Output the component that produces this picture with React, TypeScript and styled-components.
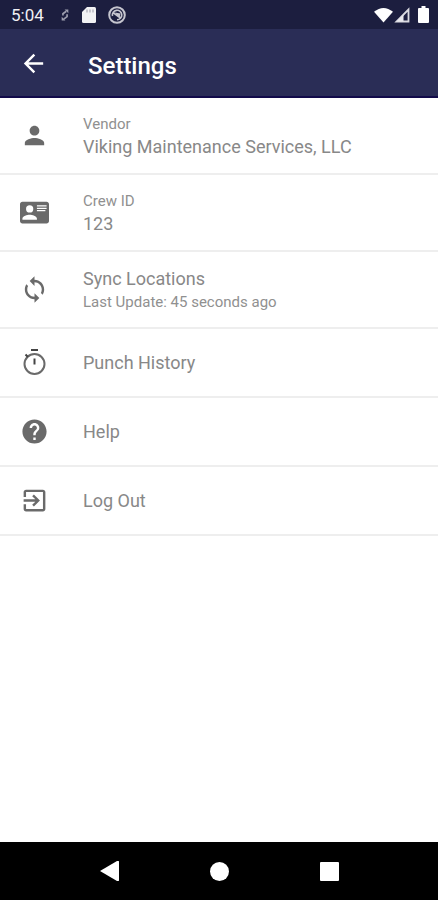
import React from 'react';
import styled, { createGlobalStyle } from 'styled-components';

const GlobalStyle = createGlobalStyle`
  * { box-sizing: border-box; }
  body { margin: 0; background: #fff; font-family: Roboto, sans-serif; }
  button { font: inherit; color: inherit; border: 0; padding: 0; background: none; cursor: pointer; }
`;

const Screen = styled.div`
  min-height: 100vh;
  display: flex;
  flex-direction: column;
`;

const StatusBar = styled.div`
  height: 29px;
  padding: 0 9px 0 11px;
  display: flex;
  align-items: center;
  justify-content: space-between;
  background: #1c1e3f;
  color: #fff;
`;

const StatusGroup = styled.div`
  display: flex;
  align-items: center;
`;

const Notifications = styled(StatusGroup)`
  gap: 12px;
  margin-left: 16px;
`;

const Indicators = styled(StatusGroup)`
  gap: 1px;
`;

const BatterySlot = styled.span`
  display: flex;
  margin-left: 7px;
`;

const Clock = styled.time`
  font-size: 17px;
  line-height: 20px;
  color: #f0f0f4;
`;

const AppBar = styled.header`
  height: 69px;
  padding: 2px 19px 0;
  display: flex;
  align-items: center;
  gap: 40px;
  background: #2a2d56;
  border-bottom: 2px solid #120b4a;
  color: #fff;
`;

const IconButton = styled.button`
  display: flex;
`;

const Title = styled.h1`
  margin: 4px 0 0;
  font-size: 24px;
  line-height: 32px;
  font-weight: 500;
`;

const List = styled.ul`
  flex: 1;
  margin: 0;
  padding: 0;
  list-style: none;
`;

const Item = styled.li`
  border-bottom: 2px solid #eee;
`;

const Row = styled.button<{ $tall: boolean }>`
  width: 100%;
  min-height: ${({ $tall }) => ($tall ? 75 : 67)}px;
  padding: 0 20px;
  display: flex;
  align-items: center;
  gap: 34px;
  text-align: left;
`;

const RowIcon = styled.span`
  width: 29px;
  display: flex;
  justify-content: center;
  color: #6a6a6a;
`;

const RowText = styled.span`
  display: flex;
  flex-direction: column;
`;

const Primary = styled.span`
  font-size: 18px;
  line-height: 24px;
  color: #888;
`;

const Secondary = styled.span`
  font-size: 15px;
  line-height: 22px;
  color: #909090;
`;

const NavBar = styled.nav`
  height: 58px;
  padding: 0 54px;
  display: grid;
  grid-template-columns: repeat(3, 1fr);
  align-items: center;
  background: #000;
  color: #fff;
`;

const NavButton = styled.button`
  display: flex;
  justify-content: center;
`;

type IconProps = { d: string; size?: number };

const Icon = ({ d, size = 29 }: IconProps) => (
  <svg width={size} height={size} viewBox="0 0 24 24" fill="currentColor" fillRule="evenodd" aria-hidden="true">
    <path d={d} />
  </svg>
);

const paths = {
  back: 'M20 11H7.83l5.59-5.59L12 4l-8 8 8 8 1.41-1.41L7.83 13H20v-2z',
  person: 'M12 12c2.21 0 4-1.79 4-4s-1.79-4-4-4-4 1.79-4 4 1.79 4 4 4zm0 2c-2.67 0-8 1.34-8 4v2h16v-2c0-2.66-5.33-4-8-4z',
  card: 'M2 3H22C23.05 3 24 3.95 24 5V19C24 20.05 23.05 21 22 21H2C.95 21 0 20.05 0 19V5C0 3.95.95 3 2 3M14 6V7H22V6H14M14 8V9H22V8H14M14 10V11H21V10H14M8 13.91C6 13.91 2 15 2 17V18H14V17C14 15 10 13.91 8 13.91M8 6A3 3 0 0 0 5 9A3 3 0 0 0 8 12A3 3 0 0 0 11 9A3 3 0 0 0 8 6Z',
  sync: 'M12 4V1L8 5l4 4V6c3.31 0 6 2.69 6 6 0 1.01-.25 1.97-.7 2.8l1.46 1.46C19.54 15.03 20 13.57 20 12c0-4.42-3.58-8-8-8zm0 14c-3.31 0-6-2.69-6-6 0-1.01.25-1.97.7-2.8L5.24 7.74C4.46 8.97 4 10.43 4 12c0 4.42 3.58 8 8 8v3l4-4-4-4v3z',
  help: 'M12 2C6.48 2 2 6.48 2 12s4.48 10 10 10 10-4.48 10-10S17.52 2 12 2zm1 17h-2v-2h2v2zm2.07-7.75l-.9.92C13.45 12.9 13 13.5 13 15h-2v-.5c0-1.1.45-2.1 1.17-2.83l1.24-1.26c.37-.36.59-.86.59-1.41 0-1.1-.9-2-2-2s-2 .9-2 2H8c0-2.21 1.79-4 4-4s4 1.79 4 4c0 .88-.36 1.68-.93 2.25z',
  logout: 'M10.09 15.59L11.5 17l5-5-5-5-1.41 1.41L12.67 11H3v2h9.67l-2.58 2.59zM19 3H5c-1.11 0-2 .9-2 2v4h2V5h14v14H5v-4H3v4c0 1.1.89 2 2 2h14c1.1 0 2-.9 2-2V5c0-1.1-.9-2-2-2z',
};

const Stopwatch = () => (
  <svg width="29" height="29" viewBox="0 0 29 29" fill="none" stroke="currentColor" strokeWidth="2" aria-hidden="true">
    <circle cx="14.5" cy="16" r="10" />
    <path d="M11 2h7M14.5 10.500v6M5.500 6.500l2.500 2.500" stroke="#444" />
  </svg>
);

const SyncStatus = () => (
  <svg width="10" height="14" viewBox="0 0 12 16" fill="none" stroke="#9c9dae" strokeWidth="2" aria-hidden="true">
    <path d="M3.500 8.500V6.500l4-3M8.500 7v3l-4 3" />
    <path d="M5.500 1.500h4.500v4.500zM2 10v4.500h4.500z" fill="#9c9dae" stroke="none" />
  </svg>
);

const SdCard = () => (
  <svg width="14" height="16" viewBox="0 0 14 16" aria-hidden="true">
    <path d="M5 0h7.500Q14 0 14 1.500v13q0 1.500-1.500 1.500h-11Q0 16 0 14.500V5z" fill="#f2f2f4" />
    <path d="M5 2.500v3M8 2.500v3M11 2.500v3" stroke="#aaa9b5" strokeWidth="1.200" />
  </svg>
);

const Badge = () => (
  <svg width="18" height="18" viewBox="0 0 18 18" fill="none" stroke="#c5c5ce" aria-hidden="true">
    <circle cx="9" cy="9" r="7.800" strokeWidth="2" />
    <path d="M4.500 10a4.700 4.700 0 1 1 4.500 3.700M5 6.500l7.500 5.500" strokeWidth="1.600" />
    <path d="M7 6.500l5.500 1-1 4.500z" fill="#c5c5ce" stroke="none" />
  </svg>
);

const Wifi = () => (
  <svg width="19" height="16" viewBox="0 0 20 16" fill="#fff" aria-hidden="true">
    <path d="M0 4.500Q10-3.500 20 4.500L10 16z" />
  </svg>
);

const Signal = () => (
  <svg width="16" height="16" viewBox="0 0 16 16" aria-hidden="true">
    <path d="M14.500 2.500V14.500H2.500z" fill="none" stroke="#d9d9df" strokeWidth="1.800" />
    <path d="M9.500 7.500v7H2.500z" fill="#e8e8ec" />
  </svg>
);

const Battery = () => (
  <svg width="11" height="17" viewBox="0 0 11 17" fill="#fff" aria-hidden="true">
    <path d="M3.500 0h4v2H10q1 0 1 1v13q0 1-1 1H1q-1 0-1-1V3q0-1 1-1h2.500z" />
  </svg>
);

type Entry = { icon: React.ReactNode; title: string; above?: string; below?: string };

const entries: Entry[] = [
  { icon: <Icon d={paths.person} />, above: 'Vendor', title: 'Viking Maintenance Services, LLC' },
  { icon: <Icon d={paths.card} />, above: 'Crew ID', title: '123' },
  { icon: <Icon d={paths.sync} />, title: 'Sync Locations', below: 'Last Update: 45 seconds ago' },
  { icon: <Stopwatch />, title: 'Punch History' },
  { icon: <Icon d={paths.help} />, title: 'Help' },
  { icon: <Icon d={paths.logout} />, title: 'Log Out' },
];

export default function App() {
  return (
    <Screen>
      <GlobalStyle />
      <StatusBar>
        <StatusGroup>
          <Clock>5:04</Clock>
          <Notifications>
            <SyncStatus />
            <SdCard />
            <Badge />
          </Notifications>
        </StatusGroup>
        <Indicators>
          <Wifi />
          <Signal />
          <BatterySlot><Battery /></BatterySlot>
        </Indicators>
      </StatusBar>
      <AppBar>
        <IconButton aria-label="Back"><Icon d={paths.back} /></IconButton>
        <Title>Settings</Title>
      </AppBar>
      <List>
        {entries.map(({ icon, title, above, below }) => (
          <Item key={title}>
            <Row $tall={Boolean(above || below)}>
              <RowIcon>{icon}</RowIcon>
              <RowText>
                {above && <Secondary>{above}</Secondary>}
                <Primary>{title}</Primary>
                {below && <Secondary>{below}</Secondary>}
              </RowText>
            </Row>
          </Item>
        ))}
      </List>
      <NavBar>
        <NavButton aria-label="Back">
          <svg width="19" height="20" viewBox="0 0 19 20" fill="currentColor"><path d="M0 10L17 0q2-1 2 1v18q0 2-2 1z" /></svg>
        </NavButton>
        <NavButton aria-label="Home">
          <svg width="19" height="19" viewBox="0 0 19 19" fill="currentColor"><circle cx="9.500" cy="9.500" r="9.500" /></svg>
        </NavButton>
        <NavButton aria-label="Recent apps">
          <svg width="19" height="19" viewBox="0 0 19 19" fill="currentColor"><rect width="19" height="19" rx="1" /></svg>
        </NavButton>
      </NavBar>
    </Screen>
  );
}
